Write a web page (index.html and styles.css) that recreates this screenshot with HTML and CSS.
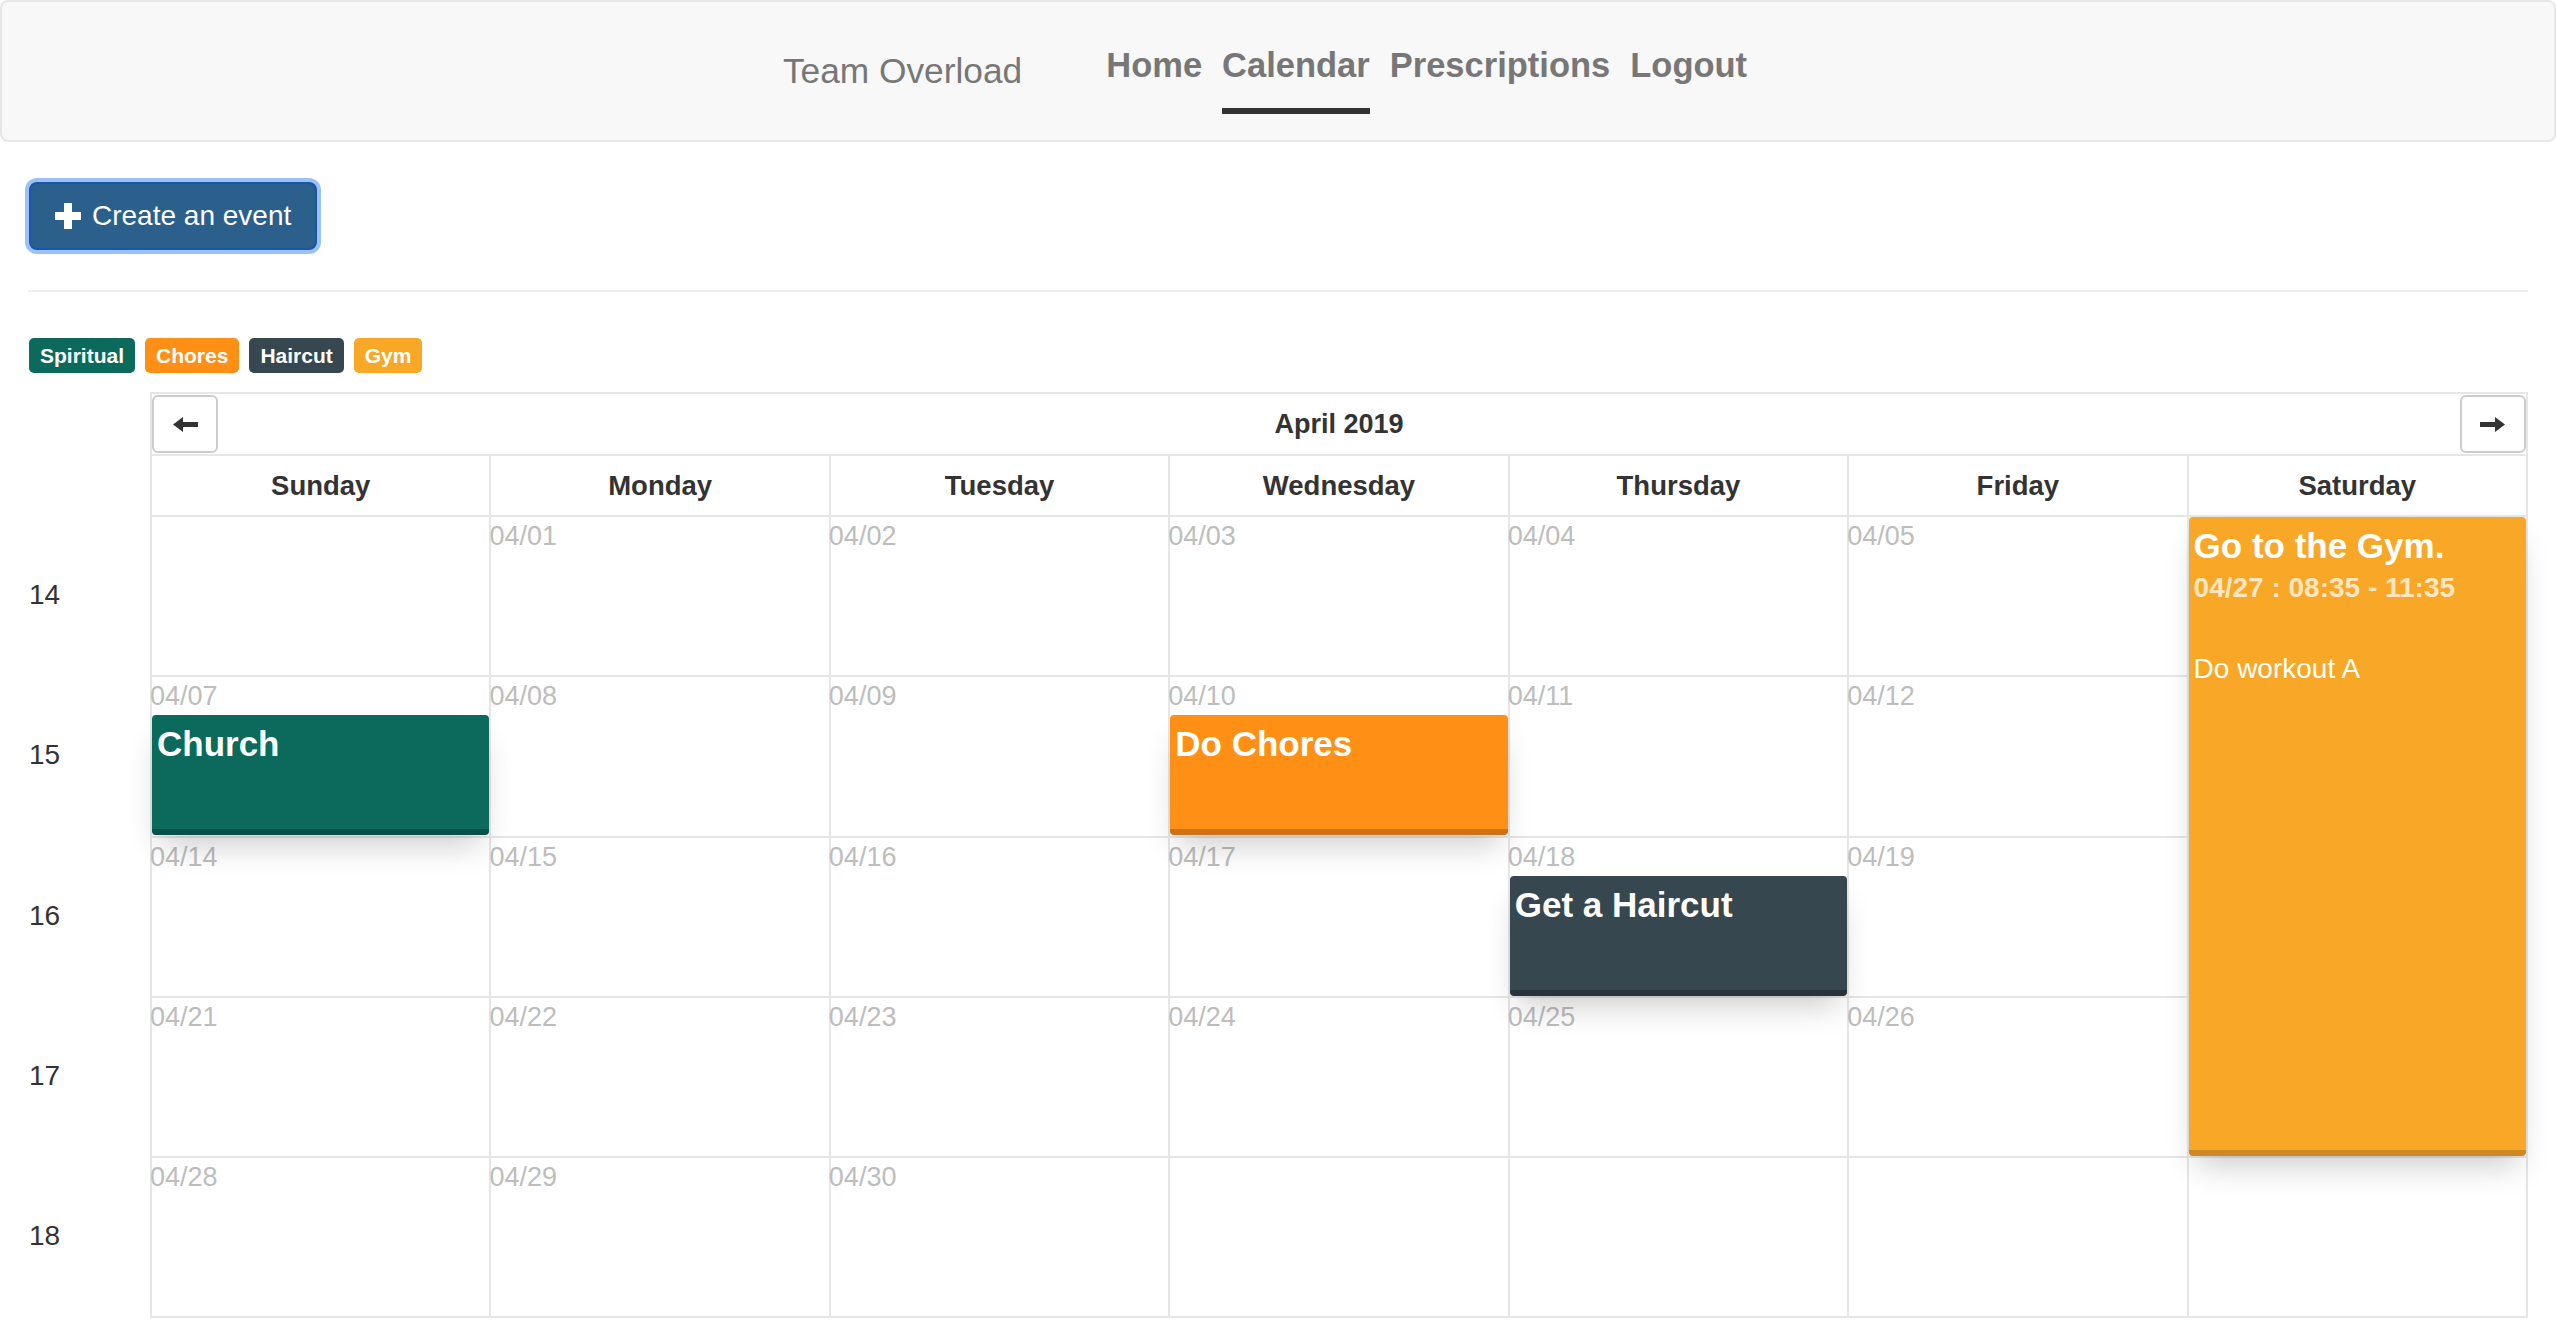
FILE: index.html
```html
<!DOCTYPE html>
<html lang="en">
<head>
<meta charset="utf-8">
<title>Team Overload - Calendar</title>
<link rel="stylesheet" href="styles.css">
</head>
<body>
<nav class="navbar">
  <span class="brand">Team Overload</span>
  <ul class="nav-links">
    <li><a class="nav-link" href="#">Home</a></li>
    <li><a class="nav-link active" href="#">Calendar</a></li>
    <li><a class="nav-link" href="#">Prescriptions</a></li>
    <li><a class="nav-link" href="#">Logout</a></li>
  </ul>
</nav>

<main class="page">
  <button class="btn-create" type="button">
    <svg class="icon-plus" viewBox="0 0 26 26" aria-hidden="true"><path d="M9 0H17V9H26V17H17V26H9V17H0V9H9Z" fill="#fff"/></svg>
    <span>Create an event</span>
  </button>

  <hr class="divider">

  <div class="legend">
    <span class="tag tag-spiritual">Spiritual</span>
    <span class="tag tag-chores">Chores</span>
    <span class="tag tag-haircut">Haircut</span>
    <span class="tag tag-gym">Gym</span>
  </div>

  <section class="calendar">
    <div class="weeks">
      <div class="week-no">14</div>
      <div class="week-no">15</div>
      <div class="week-no">16</div>
      <div class="week-no">17</div>
      <div class="week-no">18</div>
    </div>

    <div class="cal-table">
      <div class="cal-header">
        <button class="nav-btn" type="button" aria-label="Previous month">
          <svg viewBox="0 0 25 15" aria-hidden="true"><path d="M0 7.5L10 0V5H25V10H10V15Z" fill="#333"/></svg>
        </button>
        <div class="month">April 2019</div>
        <button class="nav-btn" type="button" aria-label="Next month">
          <svg viewBox="0 0 25 15" aria-hidden="true"><path d="M25 7.5L15 0V5H0V10H15V15Z" fill="#333"/></svg>
        </button>
      </div>

      <div class="cal-grid">
        <div class="dayname">Sunday</div>
        <div class="dayname">Monday</div>
        <div class="dayname">Tuesday</div>
        <div class="dayname">Wednesday</div>
        <div class="dayname">Thursday</div>
        <div class="dayname">Friday</div>
        <div class="dayname">Saturday</div>

        <div class="cell"></div>
        <div class="cell"><div class="date">04/01</div></div>
        <div class="cell"><div class="date">04/02</div></div>
        <div class="cell"><div class="date">04/03</div></div>
        <div class="cell"><div class="date">04/04</div></div>
        <div class="cell"><div class="date">04/05</div></div>
        <div class="cell cell-span4">
          <div class="event event-gym event-full">
            <h3 class="event-title">Go to the Gym.</h3>
            <h5 class="event-time">04/27 : 08:35 - 11:35</h5>
            <p class="event-desc">Do workout A</p>
          </div>
        </div>

        <div class="cell"><div class="date">04/07</div>
          <div class="event event-spiritual"><h3 class="event-title">Church</h3></div>
        </div>
        <div class="cell"><div class="date">04/08</div></div>
        <div class="cell"><div class="date">04/09</div></div>
        <div class="cell"><div class="date">04/10</div>
          <div class="event event-chores"><h3 class="event-title">Do Chores</h3></div>
        </div>
        <div class="cell"><div class="date">04/11</div></div>
        <div class="cell"><div class="date">04/12</div></div>

        <div class="cell"><div class="date">04/14</div></div>
        <div class="cell"><div class="date">04/15</div></div>
        <div class="cell"><div class="date">04/16</div></div>
        <div class="cell"><div class="date">04/17</div></div>
        <div class="cell"><div class="date">04/18</div>
          <div class="event event-haircut"><h3 class="event-title">Get a Haircut</h3></div>
        </div>
        <div class="cell"><div class="date">04/19</div></div>

        <div class="cell"><div class="date">04/21</div></div>
        <div class="cell"><div class="date">04/22</div></div>
        <div class="cell"><div class="date">04/23</div></div>
        <div class="cell"><div class="date">04/24</div></div>
        <div class="cell"><div class="date">04/25</div></div>
        <div class="cell"><div class="date">04/26</div></div>

        <div class="cell"><div class="date">04/28</div></div>
        <div class="cell"><div class="date">04/29</div></div>
        <div class="cell"><div class="date">04/30</div></div>
        <div class="cell"></div>
        <div class="cell"></div>
        <div class="cell"></div>
        <div class="cell"></div>
      </div>
    </div>
  </section>
</main>
</body>
</html>
```

FILE: styles.css
```css
* { box-sizing: border-box; }

html, body {
  margin: 0;
  padding: 0;
  overflow: hidden;
  background: #fff;
}

body {
  font-family: "Liberation Sans", Arial, Helvetica, sans-serif;
  font-size: 28px;
  color: #333;
}

/* ---------- navbar ---------- */
.navbar {
  height: 142px;
  background: #f8f8f8;
  border: 2px solid #e7e7e7;
  border-radius: 8px;
  display: flex;
  justify-content: center;
  align-items: flex-start;
  padding-right: 26px;
}

.brand {
  font-size: 35.3px;
  line-height: 35px;
  color: #777;
  padding-top: 51px;
  margin-right: 84px;
}

.nav-links {
  list-style: none;
  margin: 0;
  padding: 0;
  display: flex;
  gap: 20px;
}

.nav-link {
  display: block;
  font-size: 34.5px;
  line-height: 35px;
  font-weight: bold;
  color: #777;
  text-decoration: none;
  padding: 46px 0 25px;
  border-bottom: 6px solid transparent;
}

.nav-link.active {
  border-bottom-color: #333;
}

/* ---------- page ---------- */
.page {
  padding: 40px 28px 0;
}

.btn-create {
  display: inline-flex;
  align-items: center;
  gap: 11px;
  height: 68px;
  padding: 0 24px 0 24px;
  margin-left: 1px;
  background: #2b5f8c;
  border: 2px solid #1a55a8;
  border-radius: 8px;
  box-shadow: 0 0 0 4px rgba(100, 160, 245, 0.65);
  color: #fff;
  font-family: inherit;
  font-size: 28px;
  cursor: pointer;
}

.icon-plus {
  width: 26px;
  height: 26px;
  flex: none;
}

.divider {
  border: 0;
  border-top: 2px solid #eee;
  margin: 40px 0 46px;
}

.legend {
  display: flex;
  gap: 10px;
  padding-left: 1px;
  margin-bottom: 19px;
}

.tag {
  display: inline-flex;
  align-items: center;
  height: 35px;
  padding: 0 11px 0 11px;
  border-radius: 5px;
  color: #fff;
  font-size: 21px;
  font-weight: bold;
}

.tag-spiritual { background: #0b6a5c; }
.tag-chores { background: #ff9015; }
.tag-haircut { background: #37474f; }
.tag-gym { background: #f8a826; }

/* ---------- calendar ---------- */
.calendar {
  display: flex;
}

.weeks {
  width: 122px;
  flex: none;
  padding-top: 123px;
}

.week-no {
  height: 160.3px;
  display: flex;
  align-items: center;
  padding-left: 1px;
  font-size: 28px;
  color: #333;
}

.cal-table {
  flex: 1;
  border: 2px solid #e6e6e6;
}

.cal-header {
  height: 62px;
  border-bottom: 2px solid #e6e6e6;
  display: flex;
  align-items: stretch;
  justify-content: space-between;
  padding: 1px 0;
}

.nav-btn {
  width: 66px;
  background: #fff;
  border: 2px solid #ccc;
  border-radius: 6px;
  display: flex;
  align-items: center;
  justify-content: center;
  padding: 0;
  cursor: pointer;
}

.nav-btn svg {
  width: 25px;
  height: 15px;
}

.month {
  align-self: center;
  font-size: 27px;
  font-weight: bold;
  color: #333;
}

.cal-grid {
  display: grid;
  grid-template-columns: repeat(7, 1fr);
  grid-template-rows: 59px repeat(5, 158.3px);
  gap: 2px;
  background: #e6e6e6;
}

.dayname {
  background: #fff;
  display: flex;
  align-items: center;
  justify-content: center;
  font-size: 27.5px;
  font-weight: bold;
  color: #333;
}

.cell {
  background: #fff;
  min-width: 0;
  display: flex;
  flex-direction: column;
}

.cell-span4 {
  grid-row: span 4;
}

.date {
  font-size: 27px;
  line-height: 31px;
  padding-top: 4px;
  margin-left: -2px;
  color: #bdbdbd;
  height: 38px;
}

/* ---------- events ---------- */
.event {
  position: relative;
  z-index: 1;
  height: 120px;
  border-radius: 4px;
  border-bottom: 6px solid rgba(0, 0, 0, 0.2);
  padding: 10px 5px 0;
  color: #fff;
  box-shadow: 0 18px 30px -8px rgba(0, 0, 0, 0.2);
}

.event-full {
  height: 100%;
}

.event-spiritual { background: #0b6a5c; border-bottom-color: #08504a; }
.event-chores { background: #ff9015; border-bottom-color: #cf7215; }
.event-haircut { background: #37474f; border-bottom-color: #283439; }
.event-gym { background: #f8a826; border-bottom-color: #cd8a24; }

.event-title {
  margin: 0;
  font-size: 35px;
  line-height: 1.1;
  font-weight: bold;
  white-space: nowrap;
}

.event-time {
  margin: 7px 0 0;
  font-size: 28px;
  line-height: 1.1;
  font-weight: bold;
  color: rgba(255, 255, 255, 0.72);
}

.event-desc {
  margin: 46px 0 0;
  font-size: 28px;
  line-height: 40px;
}
```
